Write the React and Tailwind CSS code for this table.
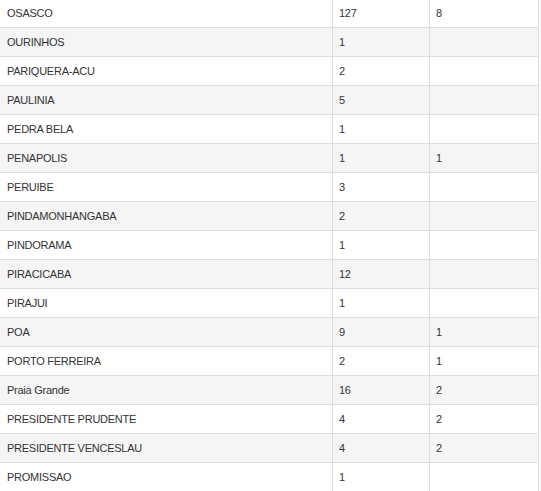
const rows = [
  ['OSASCO', '127', '8'],
  ['OURINHOS', '1', ''],
  ['PARIQUERA-ACU', '2', ''],
  ['PAULINIA', '5', ''],
  ['PEDRA BELA', '1', ''],
  ['PENAPOLIS', '1', '1'],
  ['PERUIBE', '3', ''],
  ['PINDAMONHANGABA', '2', ''],
  ['PINDORAMA', '1', ''],
  ['PIRACICABA', '12', ''],
  ['PIRAJUI', '1', ''],
  ['POA', '9', '1'],
  ['PORTO FERREIRA', '2', '1'],
  ['Praia Grande', '16', '2'],
  ['PRESIDENTE PRUDENTE', '4', '2'],
  ['PRESIDENTE VENCESLAU', '4', '2'],
  ['PROMISSAO', '1', ''],
];

export default function App() {
  return (
    <div className="h-[491px] w-[541px] overflow-hidden bg-white text-[11px] tracking-[-0.25px] text-[#333] font-['Liberation_Sans',Arial,sans-serif]">
      <div className="-mt-[2px] w-[539px] border-r border-[#ddd]">
        {rows.map((r, i) => (
          <div
            key={r[0]}
            className={`flex h-[29px] border-t border-[#ddd] ${i % 2 === 1 ? 'bg-[#f5f5f5]' : 'bg-white'}`}
          >
            <div className="flex w-[332px] items-center px-[7px]">{r[0]}</div>
            <div className="flex w-[97px] items-center border-l border-[#ddd] px-[6px]">{r[1]}</div>
            <div className="flex w-[109px] items-center border-l border-[#ddd] px-[6px]">{r[2]}</div>
          </div>
        ))}
      </div>
    </div>
  );
}
